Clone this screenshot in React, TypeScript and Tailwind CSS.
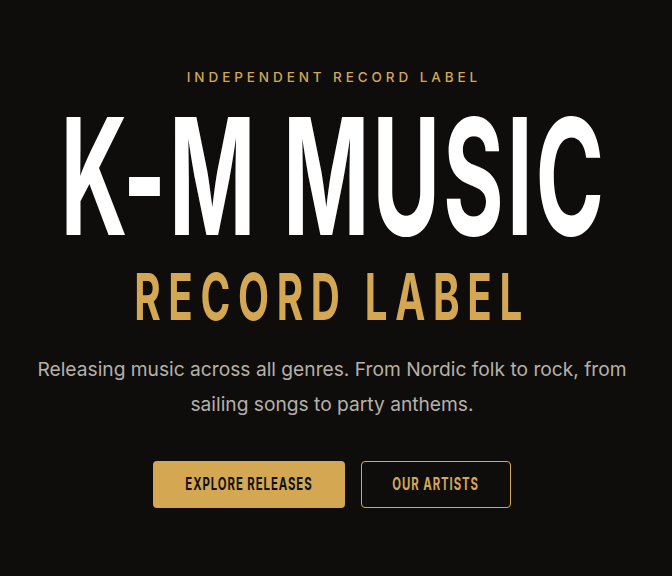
import React from "react";

const display = { fontFamily: "Inter, 'Liberation Sans', sans-serif" };

export default function App() {
  return (
    <div className="min-h-[576px] w-full bg-[#0e0d0c] flex flex-col items-center pt-[67px] pr-[8px]" style={{ fontFamily: "Inter, 'Liberation Sans', sans-serif" }}>
      <div className="text-[13.5px] leading-[20px] tracking-[0.29em] text-[#d4a853] font-medium pl-[0.29em]">
        INDEPENDENT RECORD LABEL
      </div>
      <h1
        className="mt-[8px] text-[162px] leading-none font-bold text-white whitespace-nowrap tracking-[0.03em] pl-[0.03em] scale-x-[0.573]"
        style={display}
      >
        K-M MUSIC
      </h1>
      <h2
        className="mt-[7px] text-[65px] leading-none font-bold text-[#d4a853] whitespace-nowrap tracking-[0.19em] scale-x-[0.62]"
        style={display}
      >
        RECORD LABEL
      </h2>
      <p className="mt-[23px] w-[620px] text-center text-[19.2px] leading-[35px] text-[#b6b1a9]">
        Releasing music across all genres. From Nordic folk to rock, from sailing songs to party anthems.
      </p>
      <div className="mt-[39px] flex gap-4">
        <button className="w-[192px] h-[47px] rounded bg-[#d4a853] flex items-center justify-center">
          <span className="text-[17px] font-bold tracking-[0.08em] text-[#111] scale-x-[0.67] whitespace-nowrap">EXPLORE RELEASES</span>
        </button>
        <button className="w-[150px] h-[47px] rounded border border-[#d4a853] flex items-center justify-center">
          <span className="text-[17px] font-bold tracking-[0.08em] text-[#d4a853] scale-x-[0.67] whitespace-nowrap">OUR ARTISTS</span>
        </button>
      </div>
    </div>
  );
}
